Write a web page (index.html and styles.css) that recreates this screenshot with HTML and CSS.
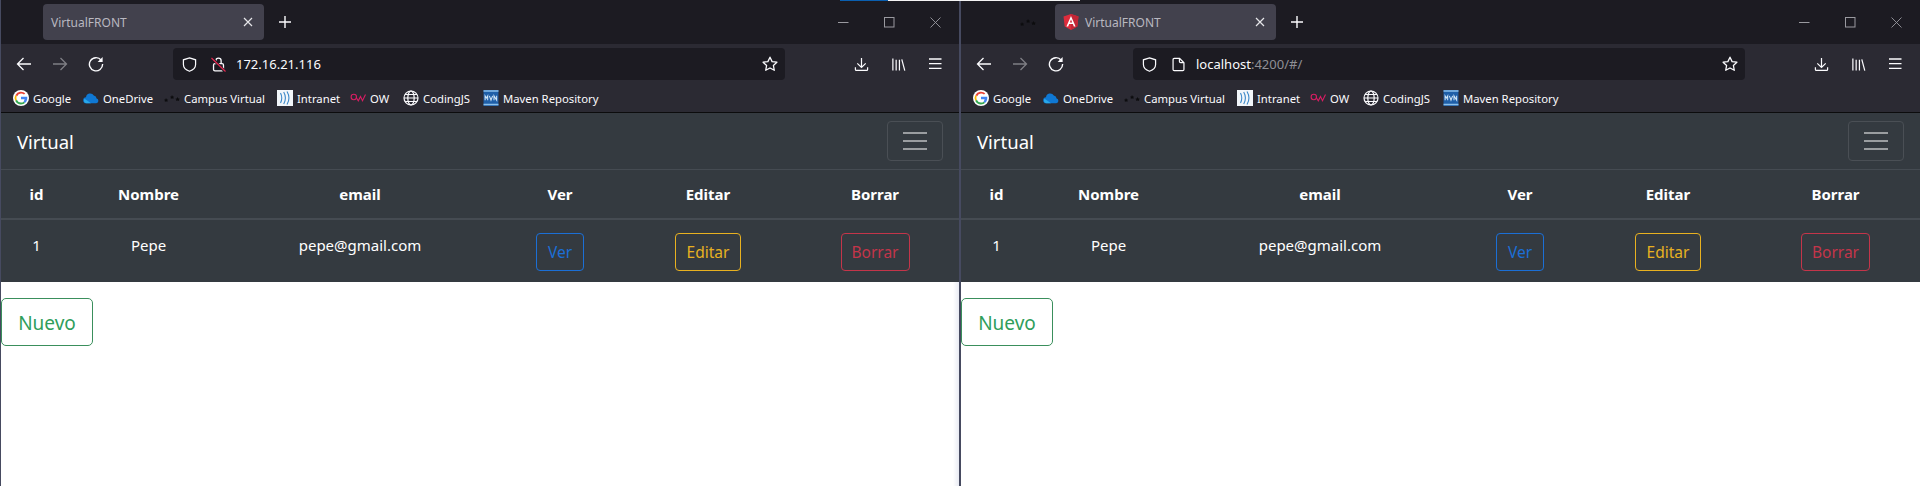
FILE: index.html
```html
<!DOCTYPE html>
<html lang="es">
<head>
    <meta charset="UTF-8">
    <title>VirtualFRONT</title>
    <link rel="stylesheet" href="styles.css">
</head>
<body>
    <svg class="sprites" width="0" height="0">
        <symbol id="i-close" viewBox="0 0 10 10"><path d="M1 1l8 8M9 1l-8 8" fill="none" stroke="currentColor" stroke-width="1.2"/></symbol>
        <symbol id="i-plus" viewBox="0 0 12 12"><path d="M6 0v12M0 6h12" fill="none" stroke="currentColor" stroke-width="1.4"/></symbol>
        <symbol id="i-min" viewBox="0 0 11 11"><path d="M0 5.5h10.500" fill="none" stroke="currentColor"/></symbol>
        <symbol id="i-max" viewBox="0 0 11 11"><rect x=".5" y=".5" width="9.500" height="9.500" fill="none" stroke="currentColor"/></symbol>
        <symbol id="i-x" viewBox="0 0 11 11"><path d="M.5.5l10 10M10.500.5l-10 10" fill="none" stroke="currentColor" stroke-width=".9"/></symbol>
        <symbol id="i-back" viewBox="0 0 16 16"><path d="M15 8H1.500M7.500 2L1.500 8l6 6" fill="none" stroke="currentColor" stroke-width="1.300"/></symbol>
        <symbol id="i-forward" viewBox="0 0 16 16"><path d="M1 8h13.500M8.500 2l6 6-6 6" fill="none" stroke="currentColor" stroke-width="1.300"/></symbol>
        <symbol id="i-reload" viewBox="0 0 16 16"><path d="M13.200 4.200A6.600 6.600 0 1 0 14.600 8" fill="none" stroke="currentColor" stroke-width="1.400"/><path d="M14.600 1v5h-5z" fill="currentColor"/></symbol>
        <symbol id="i-shield" viewBox="0 0 16 16"><path d="M8 1L14.500 3V8C14.500 11.500 11.500 14 8 15.200 4.500 14 1.500 11.500 1.500 8V3z" fill="none" stroke="currentColor" stroke-width="1.300"/></symbol>
        <symbol id="i-lock" viewBox="0 0 16 16"><path d="M5.200 7V4a2.800 2.800 0 0 1 5.600 0v3" fill="none" stroke="currentColor" stroke-width="1.400"/><rect x="2.700" y="7" width="10.600" height="7.800" rx="1.500" fill="none" stroke="currentColor" stroke-width="1.400"/><path d="M1 1l14 14.500" stroke="#1c1b22" stroke-width="3"/><path d="M.5 1l15 14.500" stroke="#e22850" stroke-width="1.300"/></symbol>
        <symbol id="i-page" viewBox="0 0 16 16"><path d="M3.500 1.500c-.8 0-1.300.5-1.300 1.300v10.400c0 .8.5 1.300 1.300 1.300h9c.8 0 1.300-.5 1.300-1.300V6.200L9.200 1.500z" fill="none" stroke="currentColor" stroke-width="1.300"/><path d="M9 1.500v3.200c0 .8.5 1.300 1.300 1.300h3.500" fill="none" stroke="currentColor" stroke-width="1.300"/></symbol>
        <symbol id="i-star" viewBox="0 0 16 16"><path d="M8 1.200l2.100 4.400 4.800.6-3.500 3.300.9 4.800L8 12l-4.300 2.300.9-4.800L1.100 6.200l4.800-.6z" fill="none" stroke="currentColor" stroke-width="1.300" stroke-linejoin="round"/></symbol>
        <symbol id="i-download" viewBox="0 0 16 16"><path d="M8 1v10M3.500 6.800L8 11.200l4.500-4.400M1.500 11v2.200c0 .6.4 1 1 1h11c.6 0 1-.4 1-1V11" fill="none" stroke="currentColor" stroke-width="1.300"/></symbol>
        <symbol id="i-library" viewBox="0 0 16 16"><path d="M2 1.500v13M5.500 3v11.500M9 3v11.500M11.500 2.500l3.200 12" fill="none" stroke="currentColor" stroke-width="1.300"/></symbol>
        <symbol id="i-menu" viewBox="0 0 14 12"><path d="M1 1h12.500M1 5.700h12.500M1 10.400h12.500" fill="none" stroke="currentColor" stroke-width="1.300"/></symbol>
        <symbol id="i-angular" viewBox="0 0 16 16"><path d="M8 0l7.500 2.600-1.200 9.900L8 16l-6.300-3.500L.5 2.600z" fill="#dd2c3c"/><path d="M8 0l7.500 2.600-1.200 9.900L8 16z" fill="#c32636"/><path d="M8 2L3.400 12.400h1.800l.9-2.300h3.800l.9 2.300h1.800zM6.800 8.600L8 5.600l1.200 3z" fill="#fff"/></symbol>
        <symbol id="i-google" viewBox="0 0 16 16"><circle cx="8" cy="8" r="8" fill="#fff"/><path d="M8 3.400a4.600 4.600 0 0 1 3 1.100l1.300-1.300A6.400 6.400 0 0 0 2.500 5l1.600 1.200A4.600 4.600 0 0 1 8 3.400z" fill="#ea4335"/><path d="M3.400 8c0-.6.1-1.200.4-1.700L2.300 5a6.400 6.400 0 0 0 0 5.900l1.500-1.200A4.600 4.600 0 0 1 3.400 8z" fill="#fbbc05"/><path d="M8 12.600a4.600 4.600 0 0 1-4.200-2.800l-1.500 1.200A6.400 6.400 0 0 0 8 14.400c1.600 0 3.100-.5 4.200-1.600l-1.500-1.100c-.7.5-1.600.9-2.700.9z" fill="#34a853"/><path d="M14.200 6.800H8v2.500h3.600c-.2.9-.7 1.700-1 2.400l1.600 1.100c1.300-1.200 2.100-3 2.100-4.900 0-.4 0-.7-.1-1.100z" fill="#4285f4"/></symbol>
        <symbol id="i-onedrive" viewBox="0 0 16 16"><path d="M3.400 13.200a3 3 0 0 1-.4-6 4.200 4.200 0 0 1 7.800-1.700 3.300 3.300 0 0 1 2.800 3 2.400 2.400 0 0 1-.3 4.700z" fill="#0f78d4"/><path d="M3.400 13.200a2.600 2.600 0 0 1-1.800-4.400L8 13.200z" fill="#28a8ea"/></symbol>
        <symbol id="i-dots" viewBox="0 0 16 8"><path d="M2 4l.8 1.500 1.400.2-1 1 .3 1.300-1.500-.7-1.200.7.2-1.300-1-1 1.400-.2zM8 1l.8 1.500 1.400.2-1 1 .3 1.300L8 4.300l-1.300.7.3-1.300-1-1 1.400-.2zM13.500 3l.9 1.500 1.500.2-1.100 1 .3 1.400-1.600-.7-1.400.7.3-1.400-1.100-1 1.500-.2z" fill="#0c0c0e"/></symbol>
        <symbol id="i-intranet" viewBox="0 0 16 16"><rect width="16" height="16" fill="#f2f6fa"/><path d="M3.500 3c1.500 3 1.500 7 0 10M6.700 2c2 3.500 2 8.500 0 12M10 1.500c2.400 4 2.400 9 0 13" fill="none" stroke="#3a87c8" stroke-width="1.100"/></symbol>
        <symbol id="i-ow" viewBox="0 0 16 10"><circle cx="3.800" cy="4" r="2.700" fill="none" stroke="#d81e63" stroke-width="1.100"/><path d="M6.500 5l1.800 2.800L10.500 3.500l2 4.300L15.500 1.500" fill="none" stroke="#d81e63" stroke-width="1.100"/></symbol>
        <symbol id="i-globe" viewBox="0 0 16 16"><g fill="none" stroke="currentColor" stroke-width="1.200"><circle cx="8" cy="8" r="7"/><ellipse cx="8" cy="8" rx="3.200" ry="7"/><path d="M1 8h14M2 4.500h12M2 11.500h12"/></g></symbol>
        <symbol id="i-maven" viewBox="0 0 14 15"><rect width="14" height="15" fill="#1f5fa8"/><path d="M0 1h14M0 13.500h14" stroke="#8cc0ea" stroke-width="1.400"/><path d="M1.500 9.500v-4l1.200 2 1.200-2v4M5.500 5.500l1.500 4 1.500-4M9.800 9.500v-4l2.500 4v-4" fill="none" stroke="#cfe4f6"/></symbol>
    </svg>

    <div class="strip-blue"></div>
    <div class="strip-white"></div>

    <div class="desktop">
        <section class="window">
            <div class="tabbar">
                <div class="tab">
                    <span class="tab-title">VirtualFRONT</span>
                    <svg class="ic-close"><use href="#i-close"/></svg>
                </div>
                <svg class="ic-plus"><use href="#i-plus"/></svg>
                <div class="controls">
                    <svg class="ic-win"><use href="#i-min"/></svg>
                    <svg class="ic-win"><use href="#i-max"/></svg>
                    <svg class="ic-win"><use href="#i-x"/></svg>
                </div>
            </div>
            <div class="toolbar">
                <svg class="ic-nav"><use href="#i-back"/></svg>
                <svg class="ic-nav off"><use href="#i-forward"/></svg>
                <svg class="ic-nav"><use href="#i-reload"/></svg>
                <div class="urlbar">
                    <svg class="ic-url"><use href="#i-shield"/></svg>
                    <svg class="ic-url ic-site"><use href="#i-lock"/></svg>
                    <span class="url">172.16.21.116</span>
                    <svg class="ic-star"><use href="#i-star"/></svg>
                </div>
                <div class="tools">
                    <svg class="ic-url"><use href="#i-download"/></svg>
                    <svg class="ic-url"><use href="#i-library"/></svg>
                    <svg class="ic-menu"><use href="#i-menu"/></svg>
                </div>
            </div>
            <div class="bookmarks">
                <a class="bm bm-google"><svg class="ic-bm"><use href="#i-google"/></svg>Google</a>
                <a class="bm bm-onedrive"><svg class="ic-bm"><use href="#i-onedrive"/></svg>OneDrive</a>
                <a class="bm bm-campus"><svg class="ic-bm"><use href="#i-dots"/></svg>Campus Virtual</a>
                <a class="bm bm-intranet"><svg class="ic-bm"><use href="#i-intranet"/></svg>Intranet</a>
                <a class="bm bm-ow"><svg class="ic-bm"><use href="#i-ow"/></svg>OW</a>
                <a class="bm bm-coding"><svg class="ic-bm"><use href="#i-globe"/></svg>CodingJS</a>
                <a class="bm"><svg class="ic-bm"><use href="#i-maven"/></svg>Maven Repository</a>
            </div>
            <main class="page">
                <nav class="navbar">
                    <span class="brand">Virtual</span>
                    <div class="toggler"><span></span><span></span><span></span></div>
                </nav>
                <table class="users">
                    <thead>
                        <tr><th class="c-id">id</th><th class="c-name">Nombre</th><th class="c-mail">email</th><th class="c-ver">Ver</th><th class="c-edit">Editar</th><th class="c-del">Borrar</th></tr>
                    </thead>
                    <tbody>
                        <tr>
                            <td>1</td><td>Pepe</td><td>pepe@gmail.com</td>
                            <td><button class="btn btn-blue">Ver</button></td>
                            <td><button class="btn btn-yellow">Editar</button></td>
                            <td><button class="btn btn-red">Borrar</button></td>
                        </tr>
                    </tbody>
                </table>
                <button class="btn-new">Nuevo</button>
            </main>
        </section>

        <section class="window">
            <div class="tabbar">
                <svg class="ic-bg-tab"><use href="#i-dots"/></svg>
                <div class="tab">
                    <svg class="ic-fav"><use href="#i-angular"/></svg>
                    <span class="tab-title">VirtualFRONT</span>
                    <svg class="ic-close"><use href="#i-close"/></svg>
                </div>
                <svg class="ic-plus"><use href="#i-plus"/></svg>
                <div class="controls">
                    <svg class="ic-win"><use href="#i-min"/></svg>
                    <svg class="ic-win"><use href="#i-max"/></svg>
                    <svg class="ic-win"><use href="#i-x"/></svg>
                </div>
            </div>
            <div class="toolbar">
                <svg class="ic-nav"><use href="#i-back"/></svg>
                <svg class="ic-nav off"><use href="#i-forward"/></svg>
                <svg class="ic-nav"><use href="#i-reload"/></svg>
                <div class="urlbar">
                    <svg class="ic-url"><use href="#i-shield"/></svg>
                    <svg class="ic-url ic-site"><use href="#i-page"/></svg>
                    <span class="url">localhost<span class="url-dim">:4200/#/</span></span>
                    <svg class="ic-star"><use href="#i-star"/></svg>
                </div>
                <div class="tools">
                    <svg class="ic-url"><use href="#i-download"/></svg>
                    <svg class="ic-url"><use href="#i-library"/></svg>
                    <svg class="ic-menu"><use href="#i-menu"/></svg>
                </div>
            </div>
            <div class="bookmarks">
                <a class="bm bm-google"><svg class="ic-bm"><use href="#i-google"/></svg>Google</a>
                <a class="bm bm-onedrive"><svg class="ic-bm"><use href="#i-onedrive"/></svg>OneDrive</a>
                <a class="bm bm-campus"><svg class="ic-bm"><use href="#i-dots"/></svg>Campus Virtual</a>
                <a class="bm bm-intranet"><svg class="ic-bm"><use href="#i-intranet"/></svg>Intranet</a>
                <a class="bm bm-ow"><svg class="ic-bm"><use href="#i-ow"/></svg>OW</a>
                <a class="bm bm-coding"><svg class="ic-bm"><use href="#i-globe"/></svg>CodingJS</a>
                <a class="bm"><svg class="ic-bm"><use href="#i-maven"/></svg>Maven Repository</a>
            </div>
            <main class="page">
                <nav class="navbar">
                    <span class="brand">Virtual</span>
                    <div class="toggler"><span></span><span></span><span></span></div>
                </nav>
                <table class="users">
                    <thead>
                        <tr><th class="c-id">id</th><th class="c-name">Nombre</th><th class="c-mail">email</th><th class="c-ver">Ver</th><th class="c-edit">Editar</th><th class="c-del">Borrar</th></tr>
                    </thead>
                    <tbody>
                        <tr>
                            <td>1</td><td>Pepe</td><td>pepe@gmail.com</td>
                            <td><button class="btn btn-blue">Ver</button></td>
                            <td><button class="btn btn-yellow">Editar</button></td>
                            <td><button class="btn btn-red">Borrar</button></td>
                        </tr>
                    </tbody>
                </table>
                <button class="btn-new">Nuevo</button>
            </main>
        </section>
    </div>
</body>
</html>
```

FILE: styles.css
```css
html, body {
    margin: 0;
    height: 486px;
    overflow: hidden;
    background: #fff;
}
body {
    font-family: "Noto Sans", "Open Sans", sans-serif;
    position: relative;
}
.sprites {
    position: absolute;
}
.strip-blue, .strip-white {
    position: absolute;
    top: 0;
    height: 1px;
}
.strip-blue {
    left: 840px;
    width: 48px;
    background: #0a5fb0;
}
.strip-white {
    left: 888px;
    width: 192px;
    background: #f4f4f4;
}
.desktop {
    display: flex;
    height: 486px;
}
.window {
    width: 960px;
    box-sizing: border-box;
    border-left: 1px solid #464a60;
    display: flex;
    flex-direction: column;
}
.window:first-child {
    border-right: 1px solid #464a60;
}

/* tab strip */
.tabbar {
    height: 44px;
    background: #1c1b22;
    display: flex;
    align-items: center;
    padding-left: 94px;
    color: #fbfbfe;
}
.window:first-child .tabbar {
    padding-left: 42px;
}
.ic-bg-tab {
    position: absolute;
    left: 1020px;
    top: 18px;
    width: 16px;
    height: 8px;
}
.tab {
    width: 221px;
    height: 36px;
    box-sizing: border-box;
    padding: 0 11px 0 8px;
    background: #42414d;
    border-radius: 4px;
    display: flex;
    align-items: center;
    font-size: 12px;
    color: #b9b8c0;
}
.ic-fav {
    width: 16px;
    height: 16px;
    margin-right: 6px;
}
.tab-title {
    flex: 1;
}
.ic-close {
    width: 10px;
    height: 10px;
    color: #e6e6ea;
}
.ic-plus {
    width: 12px;
    height: 12px;
    margin-left: 15px;
}
.controls {
    margin-left: auto;
    display: flex;
    gap: 35px;
    padding-right: 18px;
    color: #9a9aa0;
}
.ic-win {
    width: 11px;
    height: 11px;
}

/* toolbar */
.toolbar {
    height: 40px;
    background: #2b2a33;
    display: flex;
    align-items: center;
    padding-left: 15px;
    color: #fbfbfe;
}
.ic-nav {
    width: 16px;
    height: 16px;
    margin-right: 20px;
}
.ic-nav.off {
    opacity: .4;
}
.urlbar {
    width: 612px;
    height: 32px;
    margin-left: 49px;
    box-sizing: border-box;
    background: #1c1b22;
    border-radius: 4px;
    display: flex;
    align-items: center;
    padding: 0 7px 0 9px;
}
.ic-url {
    width: 15px;
    height: 15px;
    margin-right: 14px;
}
.urlbar .ic-site {
    margin-right: 10px;
}
.url {
    flex: 1;
    font-size: 13px;
    color: #fbfbfe;
}
.url-dim {
    color: #8f8f95;
}
.ic-star {
    width: 16px;
    height: 16px;
}
.tools {
    display: flex;
    align-items: center;
    padding-left: 69px;
}
.tools .ic-url {
    margin-right: 22px;
}
.ic-menu {
    width: 14px;
    height: 12px;
}

/* bookmarks */
.bookmarks {
    height: 28px;
    background: #2b2a33;
    display: flex;
    align-items: center;
    padding-left: 12px;
    font-size: 11.3px;
    color: #fbfbfe;
    border-bottom: 1px solid #0c0c0d;
}
.bm {
    display: flex;
    align-items: center;
    gap: 4px;
}
.bm-google { width: 70px; }
.bm-onedrive { width: 81px; }
.bm-campus { width: 113px; }
.bm-intranet { width: 73px; }
.bm-ow { width: 53px; }
.bm-coding { width: 80px; }
.ic-bm {
    width: 16px;
    height: 16px;
    flex: none;
}

/* page */
.page {
    flex: 1;
    background: #fff;
}
.window:first-child .page {
    background: linear-gradient(to left, #e9ebf3, #fff 6px);
}
.navbar {
    height: 57px;
    box-sizing: border-box;
    background: #343a40;
    border-bottom: 1px solid #454b52;
    display: flex;
    align-items: center;
    justify-content: space-between;
    padding: 0 16px;
}
.brand {
    font-size: 18.5px;
    color: #fff;
}
.toggler {
    width: 56px;
    height: 40px;
    box-sizing: border-box;
    border: 1px solid #4a4f55;
    border-radius: 4px;
    display: flex;
    flex-direction: column;
    align-items: center;
    justify-content: center;
    gap: 6px;
}
.toggler span {
    width: 24px;
    height: 2px;
    background: #9a9da0;
}
.users {
    width: 100%;
    table-layout: fixed;
    border-collapse: collapse;
    background: #343a40;
    color: #fff;
    font-size: 15px;
    text-align: center;
}
.users th {
    height: 48px;
    padding: 0;
    border-bottom: 2px solid #454b52;
}
.users td {
    height: 63px;
    box-sizing: border-box;
    padding: 13px 0 0;
    vertical-align: top;
    line-height: 24px;
}
.c-id { width: 71px; }
.c-name { width: 153px; }
.c-mail { width: 270px; }
.c-ver { width: 130px; }
.c-edit { width: 166px; }
.btn {
    height: 38px;
    padding: 0;
    background: transparent;
    border: 1px solid;
    border-radius: 4px;
    font: inherit;
    font-size: 15.5px;
    display: inline-block;
}
.btn-blue { color: #1b6fd6; width: 48px; }
.btn-yellow { color: #e8b120; width: 66px; }
.btn-red { color: #c4354a; width: 69px; }
.btn-new {
    display: block;
    width: 92px;
    height: 48px;
    margin-top: 16px;
    padding: 2px 0 0;
    background: #fff;
    border: 1px solid #3a8f5c;
    border-radius: 5px;
    color: #2f9e5b;
    font: 19px "Noto Sans", "Open Sans", sans-serif;
}
```
